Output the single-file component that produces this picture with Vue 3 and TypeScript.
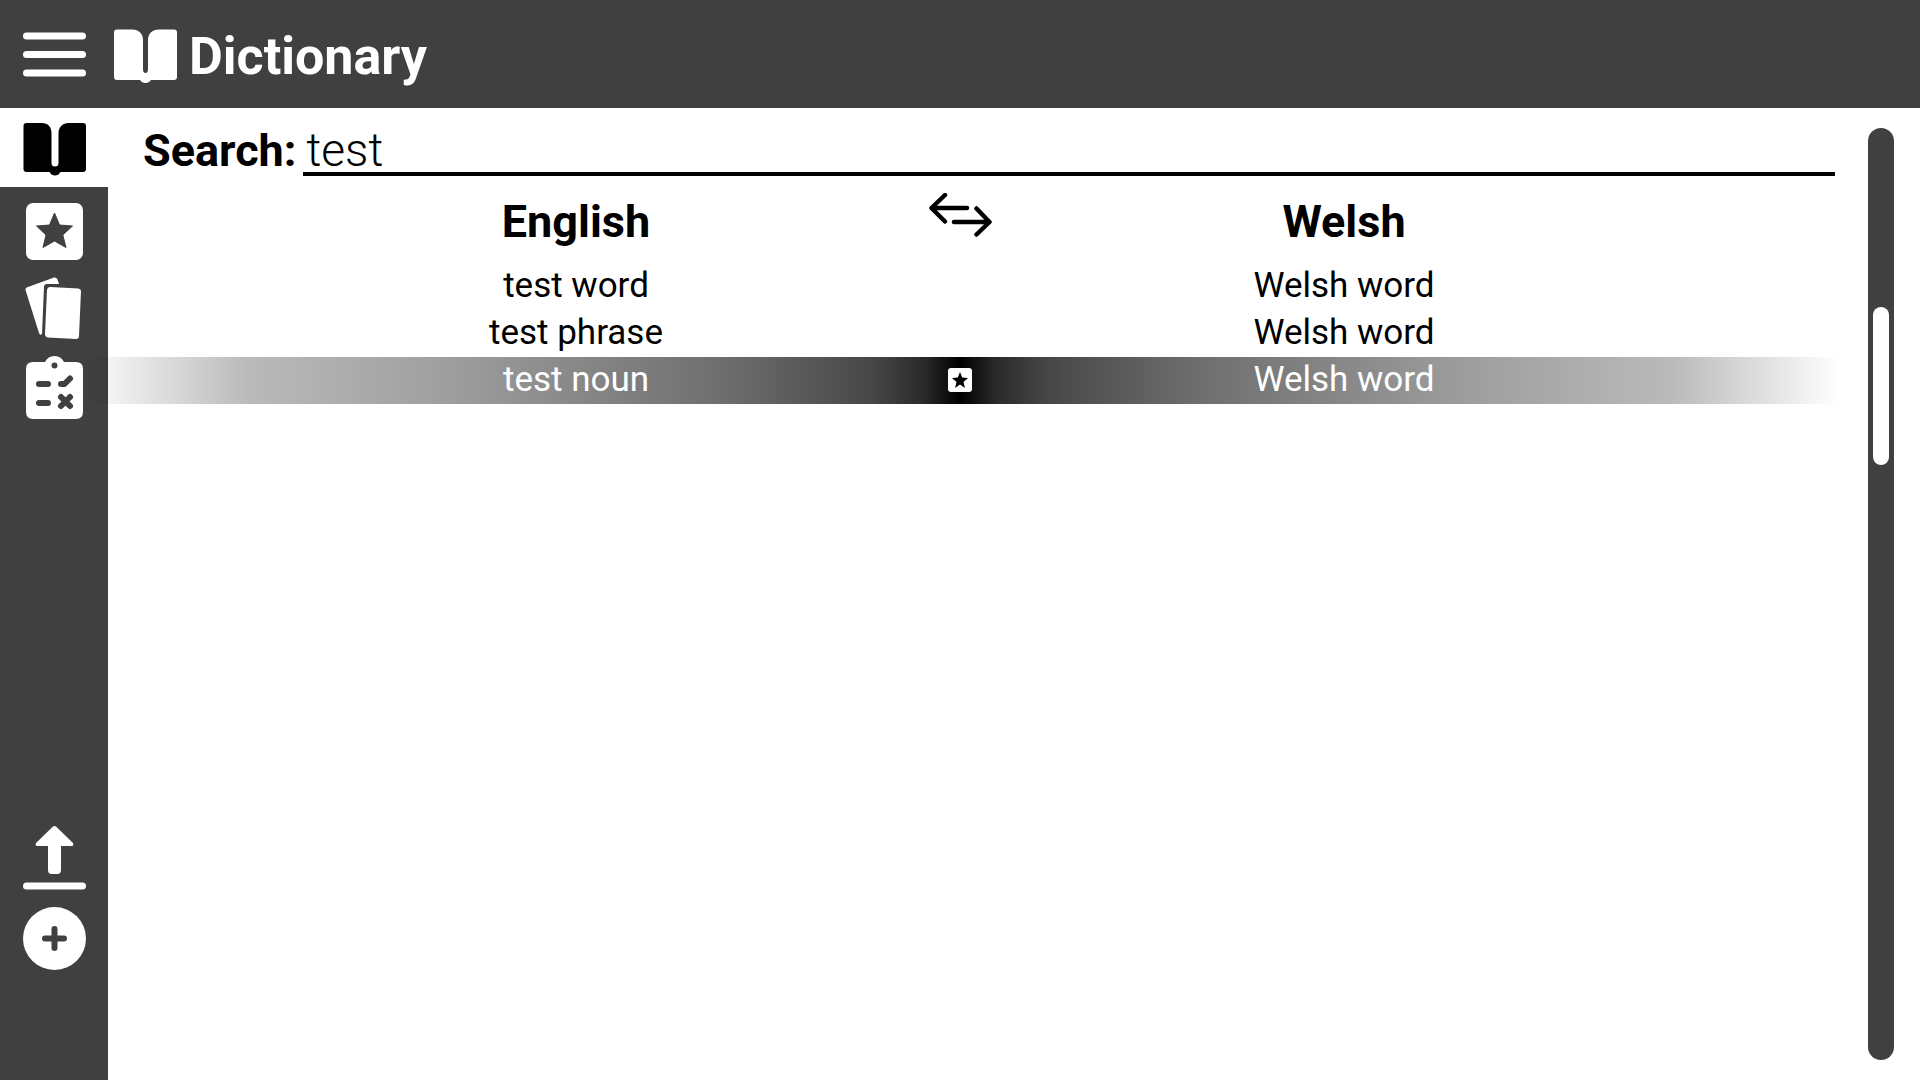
<script setup lang="ts">
import { ref, computed } from 'vue'

interface Entry {
  english: string
  welsh: string
}

const query = ref('test')
const selected = ref(2)
const swapped = ref(false)
const entries: Entry[] = [
  { english: 'test word', welsh: 'Welsh word' },
  { english: 'test phrase', welsh: 'Welsh word' },
  { english: 'test noun', welsh: 'Welsh word' },
]
const headings = computed(() => (swapped.value ? ['Welsh', 'English'] : ['English', 'Welsh']))
const left = (e: Entry) => (swapped.value ? e.welsh : e.english)
const right = (e: Entry) => (swapped.value ? e.english : e.welsh)
</script>

<template>
  <div class="app">
    <header class="topbar">
      <button class="menu" aria-label="Menu">
        <svg class="icon" viewBox="0 0 63 63">
          <path d="M3.5 13h56M3.5 31.5h56M3.5 50h56" stroke="currentColor" stroke-width="7" stroke-linecap="round" />
        </svg>
      </button>
      <svg class="icon" viewBox="0 0 63 63" aria-hidden="true">
        <path d="M3 6.5H18C25 6.5 29 11 29 17V46Q29 50 31.5 50Q34 50 34 46V17C34 11 38 6.5 45 6.5H60Q63 6.5 63 9.5V54Q63 57 60 57H37Q35 60 31.5 60Q28 60 26 57H3Q0 57 0 54V9.5Q0 6.5 3 6.5Z" fill="currentColor" />
      </svg>
      <h1>Dictionary</h1>
    </header>
    <div class="body">
      <nav class="sidebar">
        <a href="#dictionary" class="nav-item active" aria-label="Dictionary">
          <svg class="icon" viewBox="0 0 63 63">
            <path d="M3.5 4H19C25 4 28.5 8 28.5 14V44Q28.5 47.5 32 47.5Q35.5 47.5 35.5 44V14C35.5 8 40 4 45.5 4H60Q63 4 63 7V50Q63 53 60 53H37.5Q35.5 56.5 32 56.5Q28.5 56.5 26.5 53H3.5Q0.5 53 0.5 50V7Q0.5 4 3.5 4Z" fill="currentColor" />
          </svg>
        </a>
        <a href="#favourites" class="nav-item" aria-label="Favourites">
          <svg class="icon" viewBox="0 0 63 63">
            <rect x="3" y="5" width="57" height="57" rx="7" fill="currentColor" />
            <path d="M31.5 15L36.5 27L49.5 28L39.8 37L43 49.5L31.5 43L20 49.5L23 37L13.5 28L26.5 27Z" class="star-cut" />
          </svg>
        </a>
        <a href="#flashcards" class="nav-item" aria-label="Flashcards">
          <svg class="icon" viewBox="0 0 63 63">
            <path d="M5 10L31 0.5Q33.5 0 34.5 2.5L36 7H24Q21 7 21 10L19 57Q17 59 16 56L2.5 13Q2 11 5 10Z" fill="currentColor" />
            <path d="M27 10L55.5 11.5Q58 12 58 14L56 59Q56 62 53 62L25 60.5Q22 60 22 57L24 13Q24.5 10 27 10Z" fill="currentColor" />
          </svg>
        </a>
        <a href="#quiz" class="nav-item" aria-label="Quiz">
          <svg class="icon" viewBox="0 0 63 63">
            <path d="M10 6H22C24 2 27 0 31.5 0S39 2 41 6H53Q60 6 60 13V56Q60 63 53 63H10Q3 63 3 56V13Q3 6 10 6Z" fill="currentColor" />
            <circle cx="31.5" cy="9.5" r="3" class="cut" />
            <path d="M16 28h9M16 47h9M38 28h3.5L47 22.5M38 41l9 9M47 41l-9 9" class="mark" />
          </svg>
        </a>
        <div class="tools">
          <button class="nav-item" aria-label="Upload">
            <svg class="icon" viewBox="0 0 63 63">
              <path d="M30 -1.5Q31.5 -2.5 33 -1.5L50 15Q51 18 49 18H38V42Q38 46 34.5 46H28.5Q25 46 25 42V18H14Q12 18 13 15Z" fill="currentColor" />
              <path d="M3.5 58h56" stroke="currentColor" stroke-width="7" stroke-linecap="round" />
            </svg>
          </button>
          <button class="nav-item" aria-label="Add">
            <svg class="icon" viewBox="0 0 63 63">
              <circle cx="31.5" cy="31.5" r="31.5" fill="currentColor" />
              <path d="M22 31.5h19M31.5 22v19" stroke="#404040" stroke-width="6" stroke-linecap="round" />
            </svg>
          </button>
        </div>
      </nav>
      <main class="content">
        <div class="search">
          <label for="search">Search:</label>
          <input id="search" v-model="query" type="text" autocomplete="off" />
        </div>
        <table class="words">
          <thead>
            <tr>
              <th scope="col" class="first">{{ headings[0] }}</th>
              <td class="middle">
                <button class="swap" aria-label="Swap languages" @click="swapped = !swapped">
                  <svg viewBox="0 0 63 44">
                    <path d="M38 15H3M16 2L2.5 15L16 28.5M25 29H60M47.5 15.5L60.5 29L47.5 41.5" fill="none" stroke="#000" stroke-width="4.5" stroke-linecap="round" stroke-linejoin="round" />
                  </svg>
                </button>
              </td>
              <th scope="col" class="last">{{ headings[1] }}</th>
            </tr>
          </thead>
          <tbody>
            <tr v-for="(entry, i) in entries" :key="i" :class="{ selected: i === selected }" @click="selected = i">
              <td class="first">{{ left(entry) }}</td>
              <td class="middle">
                <svg v-if="i === selected" class="star" viewBox="0 0 24 24">
                  <rect width="24" height="24" rx="3" fill="#fff" />
                  <path d="M12 4L14.2 9.5L20 10L15.5 14L17 20L12 16.5L7 20L8.5 14L4 10L9.8 9.5Z" />
                </svg>
              </td>
              <td class="last">{{ right(entry) }}</td>
            </tr>
          </tbody>
        </table>
      </main>
      <div class="scrollbar"><div class="thumb"></div></div>
    </div>
  </div>
</template>

<style>
body {
  margin: 0;
  background: #fff;
}
</style>

<style scoped>
.app {
  display: flex;
  flex-direction: column;
  min-height: 100vh;
  font-family: Roboto, sans-serif;
  color: #000;
}
button {
  padding: 0;
  border: 0;
  background: none;
  color: inherit;
  cursor: pointer;
}
.icon {
  display: block;
  flex: none;
  width: 63px;
  height: 63px;
  overflow: visible;
}
.topbar {
  display: flex;
  align-items: center;
  height: 108px;
  background: #404040;
  color: #fff;
}
.menu {
  margin: 0 28px 0 23px;
}
h1 {
  margin: 6px 0 0 12px;
  font-size: 52px;
  line-height: 60px;
  font-weight: 700;
}
.body {
  display: flex;
  flex: 1;
}
.sidebar {
  display: flex;
  flex-direction: column;
  flex: none;
  width: 108px;
  background: #404040;
}
.nav-item {
  display: flex;
  justify-content: center;
  box-sizing: border-box;
  width: 108px;
  height: 79px;
  padding-top: 11px;
  color: #fff;
}
.nav-item.active {
  background: #fff;
  color: #000;
}
.cut {
  fill: #404040;
}
.star-cut {
  fill: #404040;
  stroke: #404040;
  stroke-linejoin: round;
}
.mark {
  fill: none;
  stroke: #404040;
  stroke-width: 6px;
  stroke-linecap: round;
  stroke-linejoin: round;
}
.tools {
  margin-top: auto;
  padding-bottom: 105px;
}
.content {
  flex: 1;
}
.search {
  display: flex;
  align-items: flex-end;
  margin: 12px 5px 0 35px;
  height: 56px;
}
label {
  font-size: 45px;
  line-height: 50px;
  font-weight: 700;
  margin-right: 7px;
}
input {
  flex: 1;
  min-width: 0;
  height: 56px;
  box-sizing: border-box;
  padding: 8px 3px 0;
  border: 0;
  border-bottom: 4px solid #000;
  outline: 0;
  background: none;
  font-family: inherit;
  font-size: 46px;
  line-height: 44px;
  font-weight: 300;
  color: #000;
}
.words {
  position: relative;
  width: calc(100% + 28px);
  margin-left: -28px;
  table-layout: fixed;
  border-collapse: collapse;
  text-align: center;
  font-size: 35px;
}
.words th {
  height: 83px;
  padding: 4px 0 0;
  font-size: 45px;
  font-weight: 700;
}
.words td {
  height: 45px;
  padding: 0 0 2px;
  line-height: 42px;
}
.words .first {
  padding-left: 10vw;
}
.words .last {
  padding-right: 10vw;
}
.words .middle {
  width: 160px;
}
.swap {
  display: block;
  margin: 0 auto 7px;
}
.swap svg {
  display: block;
  width: 63px;
  height: 44px;
}
.star {
  display: block;
  width: 24px;
  height: 24px;
  margin: 0 auto;
}
.selected {
  color: #fff;
  background: linear-gradient(90deg, transparent, rgba(0, 0, 0, 0.27) 9.5%, rgba(0, 0, 0, 0.38) 21%, rgba(0, 0, 0, 0.57) 36.5%, rgba(0, 0, 0, 0.72) 45%, rgba(0, 0, 0, 0.84) 48%, #000 50%, rgba(0, 0, 0, 0.84) 52%, rgba(0, 0, 0, 0.72) 55%, rgba(0, 0, 0, 0.57) 63.5%, rgba(0, 0, 0, 0.38) 79%, rgba(0, 0, 0, 0.27) 90.5%, transparent);
}
.scrollbar {
  flex: none;
  box-sizing: border-box;
  width: 26px;
  margin: 20px 26px 20px 28px;
  padding: 179px 5px 0;
  border-radius: 13px;
  background: #404040;
}
.thumb {
  height: 158px;
  border-radius: 8px;
  background: #fff;
}
</style>
